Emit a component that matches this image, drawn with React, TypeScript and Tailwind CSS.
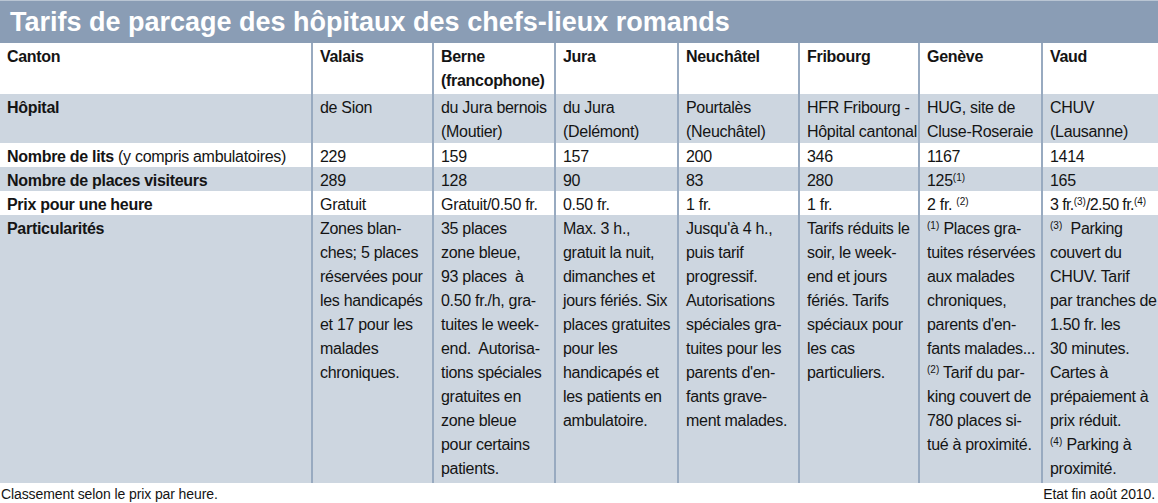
// Tarifs de parcage des hôpitaux des chefs-lieux romands
// Plain data table, one grid row per line of the original chart.

const COLS = ["Valais", "Berne|(francophone)", "Jura", "Neuchâtel", "Fribourg", "Genève", "Vaud"];

const HOPITAL = [
  ["de Sion"],
  ["du Jura bernois", "(Moutier)"],
  ["du Jura", "(Delémont)"],
  ["Pourtalès", "(Neuchâtel)"],
  ["HFR Fribourg -", "Hôpital cantonal"],
  ["HUG, site de", "Cluse-Roseraie"],
  ["CHUV", "(Lausanne)"],
];

const LITS = ["229", "159", "157", "200", "346", "1167", "1414"];

function Sup({ n }: { n: number }) {
  return <sup className="text-[10px] tracking-normal">({n})</sup>;
}

const PLACES: React.ReactNode[] = ["289", "128", "90", "83", "280", <>125<Sup n={1} /></>, "165"];

const PRIX: React.ReactNode[] = [
  "Gratuit",
  "Gratuit/0.50 fr.",
  "0.50 fr.",
  "1 fr.",
  "1 fr.",
  <>2 fr. <Sup n={2} /></>,
  <span className="tracking-[-0.6px]">3 fr.<Sup n={3} />/2.50 fr.<Sup n={4} /></span>,
];

const PARTIC: React.ReactNode[][] = [
  ["Zones blan-", "ches; 5 places", "réservées pour", "les handicapés", "et 17 pour les", "malades", "chroniques."],
  ["35 places", "zone bleue,", "93 places\u00a0 à", "0.50 fr./h, gra-", "tuites le week-", "end.\u00a0 Autorisa-", "tions spéciales", "gratuites en", "zone bleue", "pour certains", "patients."],
  ["Max. 3 h.,", "gratuit la nuit,", "dimanches et", "jours fériés. Six", "places gratuites", "pour les", "handicapés et", "les patients en", "ambulatoire."],
  ["Jusqu'à 4 h.,", "puis tarif", "progressif.", "Autorisations", "spéciales gra-", "tuites pour les", "parents d'en-", "fants grave-", "ment malades."],
  ["Tarifs réduits le", "soir, le week-", "end et jours", "fériés. Tarifs", "spéciaux pour", "les cas", "particuliers."],
  [
    <><Sup n={1} /> Places gra-</>,
    "tuites réservées",
    "aux malades",
    "chroniques,",
    "parents d'en-",
    "fants malades...",
    <><Sup n={2} /> Tarif du par-</>,
    "king couvert de",
    "780 places si-",
    "tué à proximité.",
  ],
  [
    <><Sup n={3} />&nbsp; Parking</>,
    "couvert du",
    "CHUV. Tarif",
    "par tranches de",
    "1.50 fr. les",
    "30 minutes.",
    "Cartes à",
    "prépaiement à",
    "prix réduit.",
    <><Sup n={4} /> Parking à</>,
    "proximité.",
  ],
];

function Lines({ lines }: { lines: React.ReactNode[] }) {
  return (
    <>
      {lines.map((l, i) => (
        <div key={i} className="whitespace-nowrap">{l}</div>
      ))}
    </>
  );
}

function Row({
  label,
  cells,
  grey,
  height,
}: {
  label: React.ReactNode;
  cells: React.ReactNode[];
  grey?: boolean;
  height: string;
}) {
  return (
    <>
      <div className={`${height} pl-[7px] pt-[2px] font-bold whitespace-nowrap ${grey ? "bg-[#cdd6e0]" : "bg-white"}`}>{label}</div>
      {cells.map((c, i) => (
        <div
          key={i}
          className={`${height} border-l-2 border-[#98aac0] pl-[7px] pt-[2px] whitespace-nowrap ${grey ? "bg-[#cdd6e0]" : "bg-white"}`}
        >
          {c}
        </div>
      ))}
    </>
  );
}

export default function App() {
  return (
    <div className="w-[1158px] h-[503px] overflow-hidden bg-white text-[#141414] font-['Liberation_Sans',sans-serif] text-[16px] tracking-[-0.3px] leading-6">
      <div className="h-[43px] bg-[#8a9db5] border-t border-[#b9c5d3] pl-[10px] pt-[5px]">
        <h1 className="text-[27px] leading-[32px] font-bold text-white tracking-normal">
          Tarifs de parcage des hôpitaux des chefs-lieux romands
        </h1>
      </div>

      <div className="grid grid-cols-[311px_121px_122px_123px_121px_120px_123px_1fr]">
        <Row
          height="h-[51px]"
          label="Canton"
          cells={COLS.map((c) => (
            <div className="font-bold">
              <Lines lines={c.split("|")} />
            </div>
          ))}
        />
        <Row height="h-[49px]" grey label="Hôpital" cells={HOPITAL.map((h) => <Lines lines={h} />)} />
        <Row
          height="h-6"
          label={
            <>
              Nombre de lits <span className="font-normal">(y compris ambulatoires)</span>
            </>
          }
          cells={LITS}
        />
        <Row height="h-6" grey label="Nombre de places visiteurs" cells={PLACES} />
        <Row height="h-6" label="Prix pour une heure" cells={PRIX} />
        <Row height="h-[268px]" grey label="Particularités" cells={PARTIC.map((p) => <Lines lines={p} />)} />
      </div>

      <div className="flex justify-between pl-[1px] pr-[3px] pt-[1px] text-[14px] tracking-[-0.1px] leading-5">
        <span>Classement selon le prix par heure.</span>
        <span>Etat fin août 2010.</span>
      </div>
    </div>
  );
}
